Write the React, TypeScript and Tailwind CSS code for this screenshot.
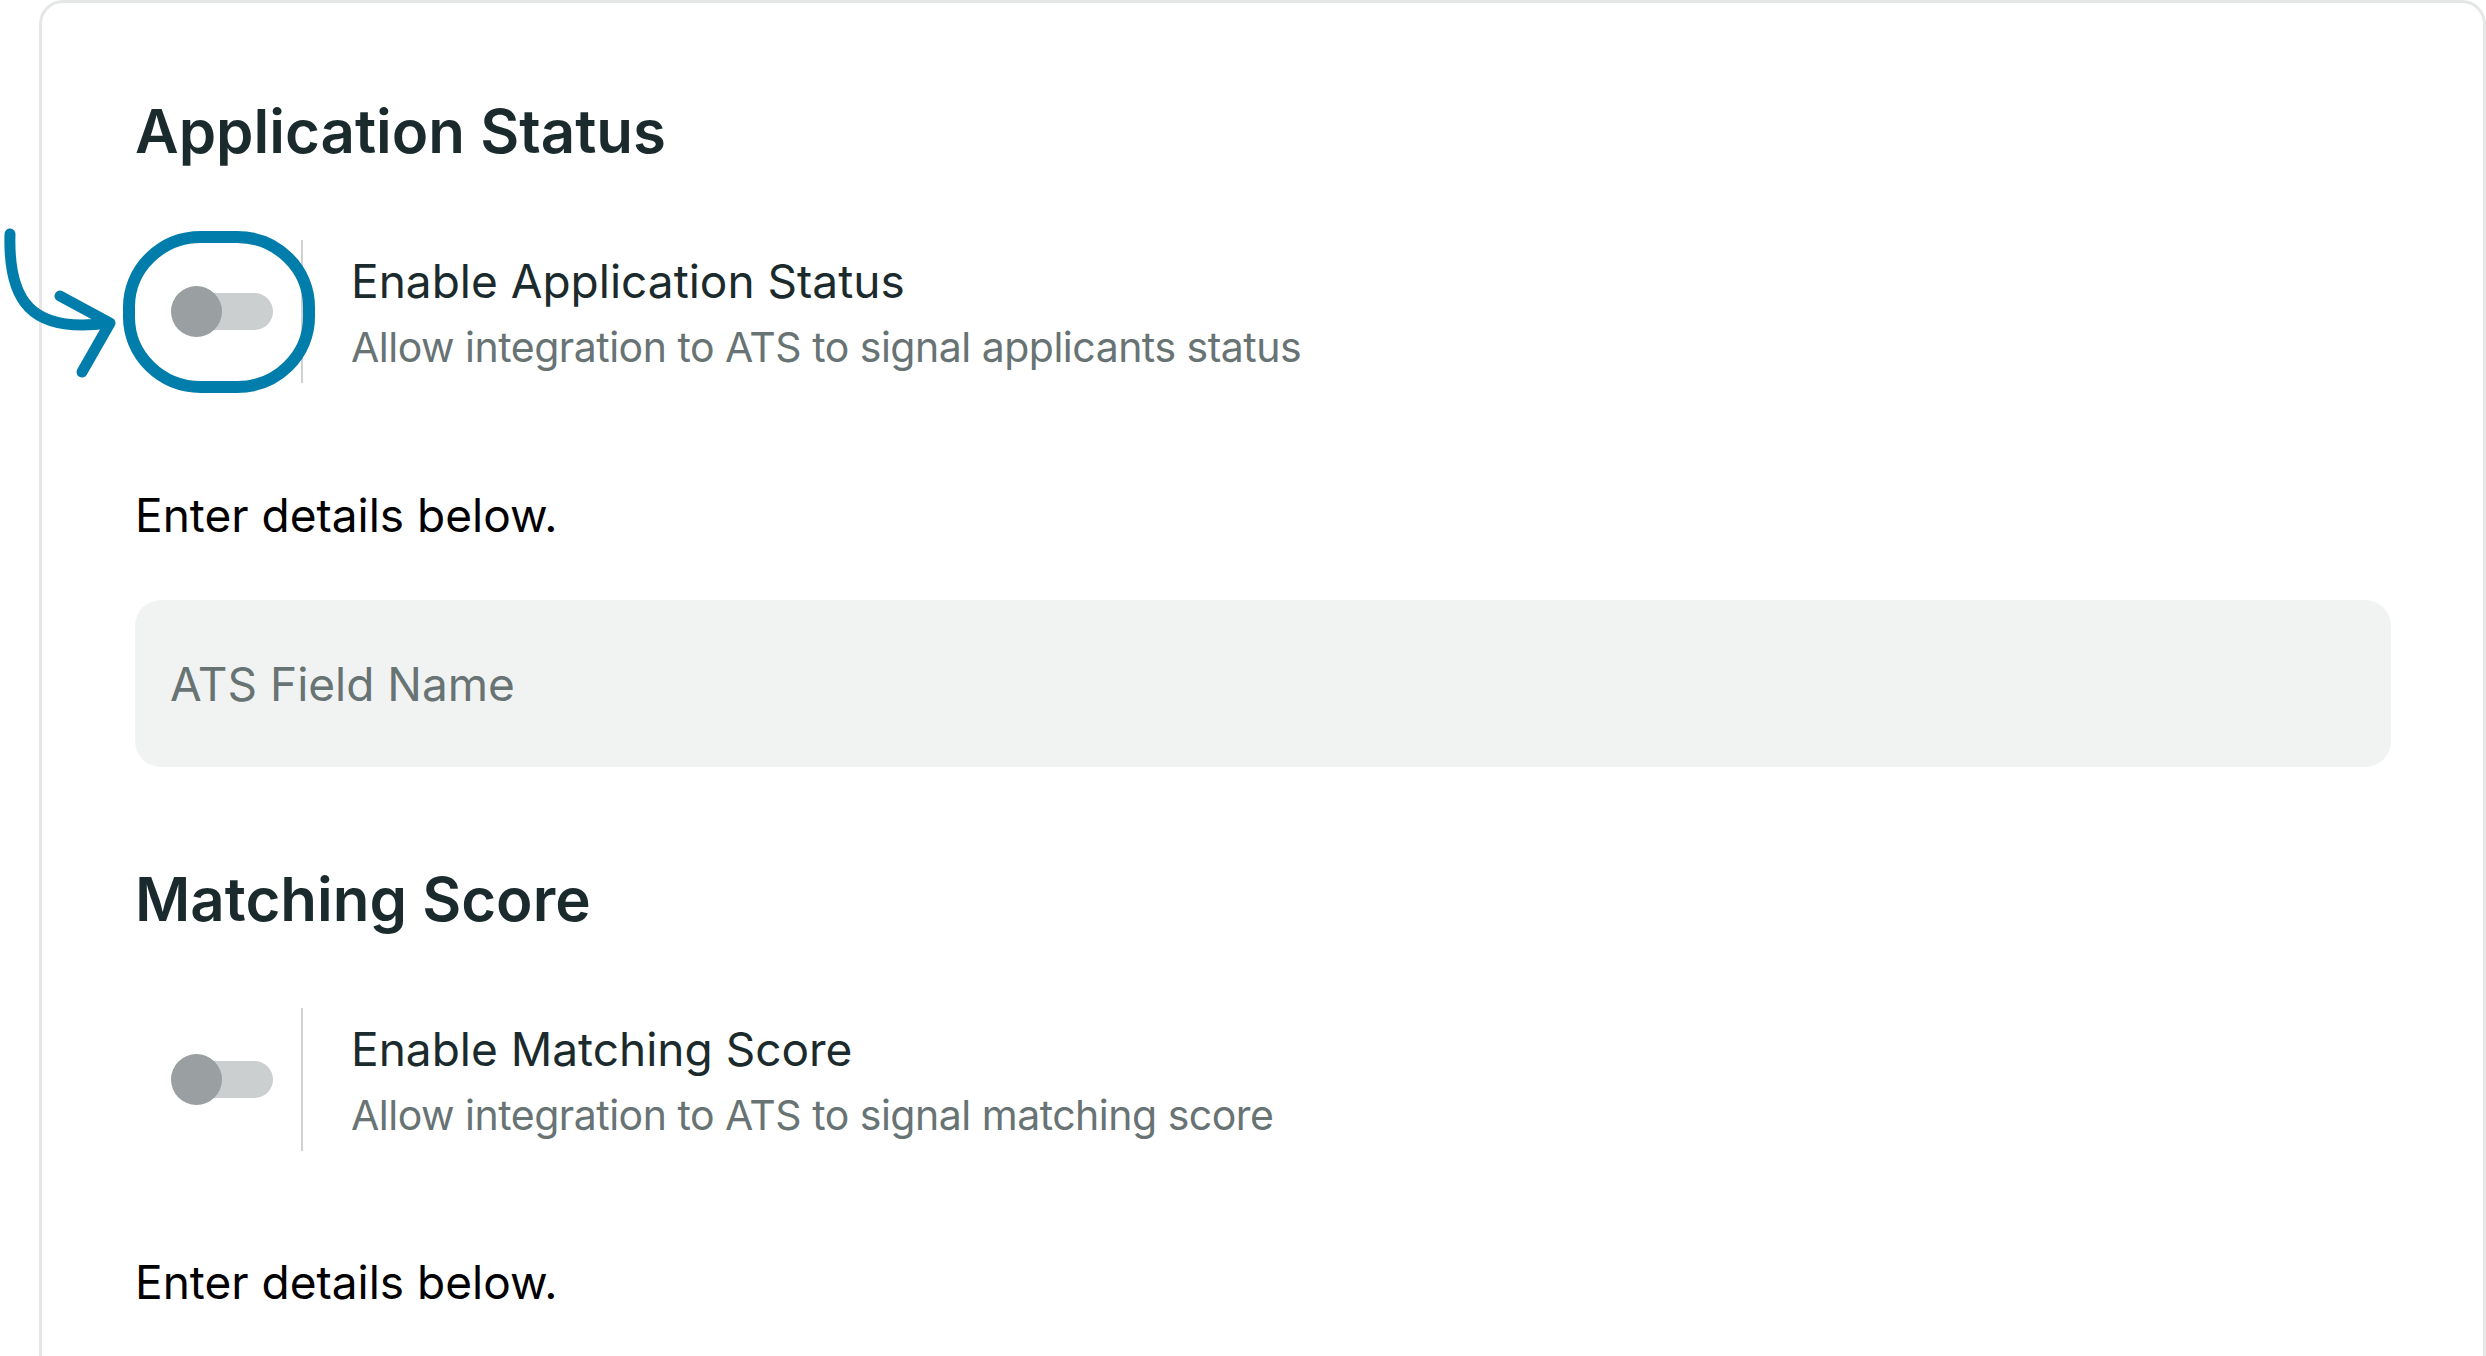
import React from "react";

function Toggle() {
  return (
    <div className="relative flex h-[51px] w-[102px] items-center">
      <div className="ml-[10px] h-[37px] w-[92px] rounded-full bg-[#cbcfcf]" />
      <div className="absolute left-0 top-0 h-[51px] w-[51px] rounded-full bg-[#9aa0a1]" />
    </div>
  );
}

function ToggleRow({ title, desc, className = "" }: { title: string; desc: string; className?: string }) {
  return (
    <div className={`flex h-[143px] items-center ${className}`}>
      <div className="pl-[36px] pr-[28px]">
        <Toggle />
      </div>
      <div className="w-[2px] self-stretch bg-[#d0d2d2]" />
      <div className="mt-[4px] pl-[48px]">
        <p className="text-[46px] leading-[56px] text-[#1b2b2d]">{title}</p>
        <p className="mt-[10px] text-[41px] leading-[56px] tracking-[-0.5px] text-[#687374]">{desc}</p>
      </div>
    </div>
  );
}

export default function App() {
  return (
    <div className="relative h-[1356px] overflow-hidden bg-white font-['Inter',sans-serif]">
      <div className="ml-[39px] h-[1420px] rounded-t-[24px] border-[3px] border-b-0 border-[#e5e7e7] pl-[93px] pr-[92px] pt-[92px]">
        <h2 className="text-[60px] font-semibold leading-[72px] text-[#1b2b2d]">Application Status</h2>
        <ToggleRow
          className="mt-[73px]"
          title="Enable Application Status"
          desc="Allow integration to ATS to signal applicants status"
        />
        <p className="mt-[104px] text-[46px] leading-[56px] text-black">Enter details below.</p>
        <div className="mt-[57px] flex h-[167px] items-center rounded-[26px] bg-[#f1f3f2] pl-[35px]">
          <span className="text-[46px] leading-[56px] text-[#687374]">ATS Field Name</span>
        </div>

        <h2 className="mt-[96px] text-[60px] font-semibold leading-[72px] text-[#1b2b2d]">Matching Score</h2>
        <ToggleRow
          className="mt-[73px]"
          title="Enable Matching Score"
          desc="Allow integration to ATS to signal matching score"
        />
        <p className="mt-[103px] text-[46px] leading-[56px] text-black">Enter details below.</p>
      </div>

      {/* annotation: arrow + ring around first toggle */}
      <svg className="pointer-events-none absolute left-0 top-0" width="340" height="420" viewBox="0 0 340 420" fill="none">
        <rect x="129" y="237" width="180" height="150" rx="72" ry="70" stroke="#007dab" strokeWidth="12" />
        <path d="M10 234 C8 300 30 334 108 323" stroke="#007dab" strokeWidth="11" strokeLinecap="round" />
        <path d="M60 296 L110 323 L82 372" stroke="#007dab" strokeWidth="11" strokeLinecap="round" strokeLinejoin="round" />
      </svg>
    </div>
  );
}
